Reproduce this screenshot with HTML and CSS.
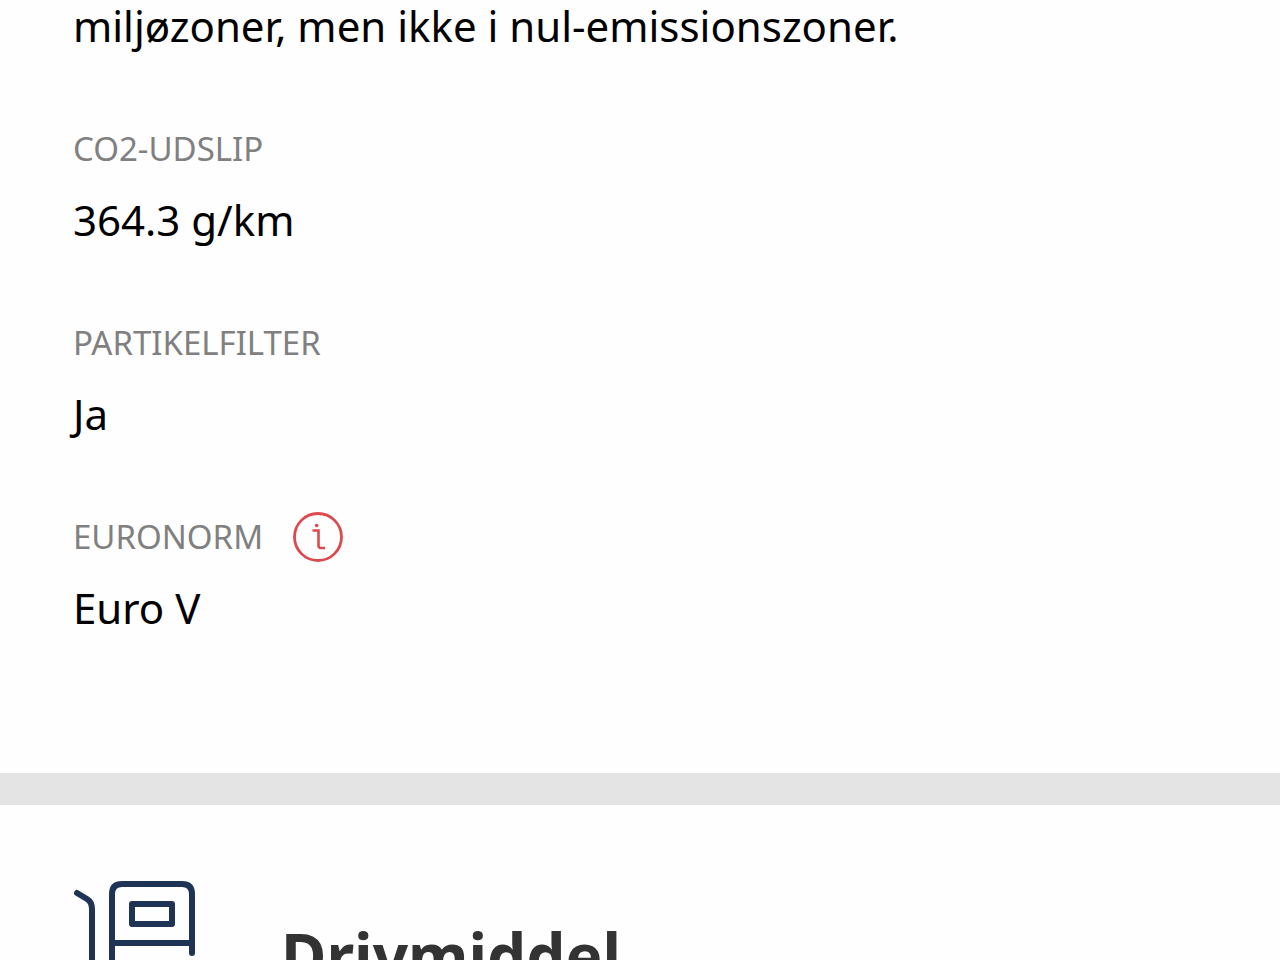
FILE: index.html
```html
<!DOCTYPE html>
<html lang="da">
<head>
    <meta charset="UTF-8">
    <meta name="viewport" content="width=device-width, initial-scale=1.0">
    <title>Miljø og drivmiddel</title>
    <link rel="stylesheet" href="styles.css">
</head>
<body>
    <section class="section environment">
        <p class="value">miljøzoner, men ikke i nul-emissionszoner.</p>
        <dl class="facts">
            <div class="fact">
                <dt class="label">CO2-UDSLIP</dt>
                <dd class="value">364.3 g/km</dd>
            </div>
            <div class="fact">
                <dt class="label">PARTIKELFILTER</dt>
                <dd class="value">Ja</dd>
            </div>
            <div class="fact">
                <dt class="label">
                    EURONORM
                    <button class="info" type="button" aria-label="Information om euronorm">
                        <svg viewBox="0 0 50 50" fill="none" stroke="currentColor">
                            <circle cx="25" cy="25" r="23.5" stroke-width="2.8"/>
                            <path d="M19.5 18.5h6V33.5q0 2.5 2.5 2.5h4" stroke-width="2.6"/>
                            <circle cx="23.7" cy="13.5" r="1.8" fill="currentColor" stroke="none"/>
                        </svg>
                    </button>
                </dt>
                <dd class="value">Euro V</dd>
            </div>
        </dl>
    </section>

    <section class="section fuel">
        <svg class="fuel-icon" viewBox="0 0 124 124" fill="none" stroke="currentColor" stroke-width="6" stroke-linecap="round" stroke-linejoin="round">
            <path d="M4 13L14 19Q19 22 19 29V100"/>
            <path d="M39 120V14Q39 4 49 4H109Q119 4 119 14V73"/>
            <path d="M39 63H119"/>
            <path d="M59 24H99V44H59Z"/>
        </svg>
        <h2 class="heading">Drivmiddel</h2>
    </section>
</body>
</html>
```

FILE: styles.css
```css
body {
    font-family: "Noto Sans", "Open Sans", sans-serif;
    background-color: #fefefe;
    color: #000;
    margin: 0;
    height: 100vh;
    overflow: hidden;
}
.section {
    padding: 0 73px;
}
.environment {
    margin-top: -6px;
    padding-bottom: 133px;
    border-bottom: 32px solid #e4e4e4;
}
.facts {
    margin: 0;
}
.fact {
    margin-top: 66px;
}
.label {
    display: flex;
    align-items: center;
    gap: 30px;
    height: 50px;
    margin-bottom: 14px;
    color: #808080;
    font-size: 33px;
    line-height: 50px;
}
.value {
    margin: 0;
    font-size: 42px;
    line-height: 64px;
}
.info {
    width: 50px;
    height: 50px;
    padding: 0;
    border: none;
    background: none;
    color: #dc4a50;
    cursor: pointer;
}
.info svg {
    display: block;
}
.fuel {
    display: flex;
    align-items: center;
    gap: 84px;
    padding-top: 75px;
}
.fuel-icon {
    flex: none;
    width: 124px;
    height: 124px;
    color: #1f3354;
}
.heading {
    margin: 26px 0 0;
    color: #333;
    font-size: 62px;
    line-height: 88px;
}
```
